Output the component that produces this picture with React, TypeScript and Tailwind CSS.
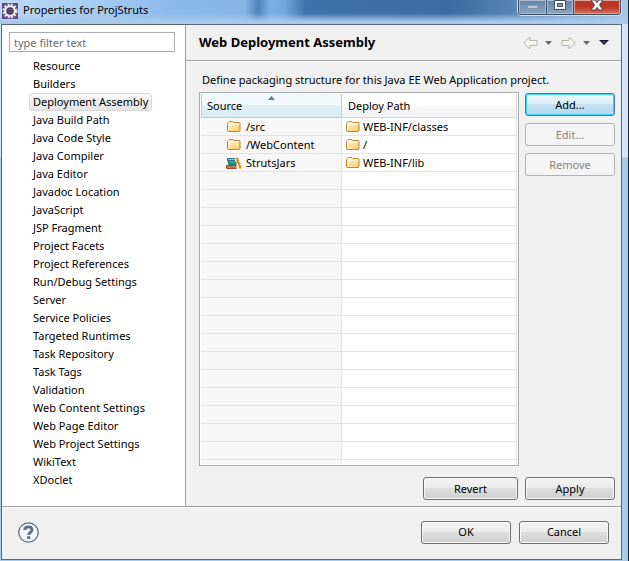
import { ReactNode } from "react"
import clsx from "clsx"

const pages = [
  "Resource",
  "Builders",
  "Deployment Assembly",
  "Java Build Path",
  "Java Code Style",
  "Java Compiler",
  "Java Editor",
  "Javadoc Location",
  "JavaScript",
  "JSP Fragment",
  "Project Facets",
  "Project References",
  "Run/Debug Settings",
  "Server",
  "Service Policies",
  "Targeted Runtimes",
  "Task Repository",
  "Task Tags",
  "Validation",
  "Web Content Settings",
  "Web Page Editor",
  "Web Project Settings",
  "WikiText",
  "XDoclet",
]

const mappings = [
  { source: "/src", path: "WEB-INF/classes", icon: "folder" },
  { source: "/WebContent", path: "/", icon: "folder" },
  { source: "StrutsJars", path: "WEB-INF/lib", icon: "library" },
]

const EMPTY_ROWS = 16

function FolderIcon() {
  return (
    <svg width="14" height="12" viewBox="0 0 14 12" className="shrink-0">
      <defs>
        <linearGradient id="folder" x1="0" y1="0" x2="1" y2="1">
          <stop offset="0" stopColor="#fffae6" />
          <stop offset="1" stopColor="#fcc95f" />
        </linearGradient>
      </defs>
      <path
        d="M.5 9.500V2.500q0-1 1-1l.7-1h3.600l.9 1H12q1 0 1 1v7q0 1-1 1H1.500q-1 0-1-1z"
        fill="url(#folder)"
        stroke="#bf8535"
      />
      <path d="M2 3h10" stroke="#fffdf0" />
    </svg>
  )
}

function LibraryIcon() {
  return (
    <svg width="16" height="12" viewBox="0 0 16 12" className="shrink-0">
      <path d="M1 1h8v3.500H1z" fill="#2b6f8f" />
      <path d="M2 2.500h7" stroke="#8cc4cf" />
      <path d="M2 4.500h8.500V8H3L2 7z" fill="#0d7a5c" />
      <path d="M3 6h7" stroke="#3cc795" />
      <path d="M0 8h10.500v4H1L0 11z" fill="#a8482a" />
      <path d="M1 10h9" stroke="#e8a888" />
      <path d="M9.500 1l2.300-1L15.800 11l-2.300 1z" fill="#eda520" />
      <path d="M11 2.500l3 8" stroke="#a8650f" strokeDasharray="2 1.500" />
    </svg>
  )
}

function Arrow({ flip }: { flip?: boolean }) {
  return (
    <svg width="15" height="12" viewBox="0 0 15 12" className={clsx(flip && "-scale-x-100")}>
      <path
        d="M.8 6L6 .7h1v2.800h7v5H7v2.800H6z"
        fill="#f7f7f0"
        stroke="#b4b4a8"
        strokeLinejoin="round"
      />
    </svg>
  )
}

function Caret() {
  return (
    <svg width="7" height="4" viewBox="0 0 7 4">
      <path d="M0 0h7L3.500 4z" fill="#6b6b6b" />
    </svg>
  )
}

function DialogButton({
  children,
  primary,
  disabled,
  wide,
}: {
  children: ReactNode
  primary?: boolean
  disabled?: boolean
  wide?: boolean
}) {
  return (
    <button
      disabled={disabled}
      className={clsx(
        "h-[23px] rounded-[3px] border text-center leading-5",
        wide ? "w-[95px]" : "w-[90px]",
        "disabled:border-[#adb2b5] disabled:bg-none disabled:bg-[#f4f4f4] disabled:text-[#838383] disabled:shadow-none",
        primary
          ? "border-[#3c7fb1] bg-[linear-gradient(#edf6fb_0%,#dceef8_48%,#c3e2f3_50%,#b2d7ed_100%)] shadow-[inset_0_0_0_1px_#38d0fa]"
          : "border-[#707070] bg-[linear-gradient(#f2f2f2_0%,#ebebeb_48%,#dddddd_50%,#cfcfcf_100%)] shadow-[inset_0_0_0_1px_#f8f8f8]"
      )}
    >
      {children}
    </button>
  )
}

function TitleBar() {
  return (
    <header className="flex h-6 items-start justify-between bg-[linear-gradient(transparent_55%,#a9c8ea_90%),linear-gradient(90deg,#bfd9f5_0px,#a4cbf3_100px,#8abaec_170px,#86b4e6_245px,#4f82b8_258px,#7aaee4_270px,#72a6dc_285px,#3f72aa_305px,#3b6ba1_450px,#5583b5_510px,#a9c8e8_100%)] pl-[2px]">
      <div className="flex items-center gap-1">
        <svg width="16" height="18" viewBox="0 0 16 18">
          <path d="M0 2h16v16H0z" fill="#5b4a80" />
          <circle cx="8" cy="10" r="6.300" fill="none" stroke="#e3e1ea" strokeWidth="2.500" strokeDasharray="2 1.300" />
          <circle cx="8" cy="10" r="4.800" fill="#453a5c" stroke="#f2f2f4" strokeWidth="2" />
          <path d="M5 8.500h6M5 11h6" stroke="#6b5c86" />
        </svg>
        <h1 className="pl-px leading-5">Properties for ProjStruts</h1>
      </div>
      <div className="mr-[7px] flex h-[15px] overflow-hidden rounded-b-[4px] border border-t-0 border-[#3b4a5e] shadow-[0_0_0_1px_#cfe0f2]">
        <button
          aria-label="Minimize"
          className="flex w-7 items-center justify-center border-r border-[#3b4a5e] bg-[linear-gradient(#6482a4,#8ba7c6)] shadow-[inset_0_0_0_1px_#a9bfd7]"
        >
          <svg width="11" height="4">
            <path d="M.5.5h10v3H.5z" fill="#bcc8d5" stroke="#8796a8" />
          </svg>
        </button>
        <button
          aria-label="Maximize"
          className="flex w-[27px] justify-center border-r border-[#3b4a5e] bg-[linear-gradient(#6482a4,#8ba7c6)] shadow-[inset_0_0_0_1px_#a9bfd7]"
        >
          <svg width="12" height="11">
            <path d="M0 0h12v10H0z" fill="#434e63" />
            <path d="M1 1h10v8H1z" fill="#fff" />
            <path d="M3.500 3.500h5v3h-5z" fill="#7d99b9" stroke="#434e63" />
          </svg>
        </button>
        <button
          aria-label="Close"
          className="flex w-[46px] justify-center bg-[linear-gradient(#b5392b_0%,#bf3524_50%,#d4705d_100%)] shadow-[inset_0_0_0_1px_#dba49b]"
        >
          <svg width="12" height="11">
            <path d="M0 0h4l2 2.500L8 0h4L8.500 5l3.500 5H8L6 7.500 4 10H0l3.500-5z" fill="#fff" stroke="#53424d" />
          </svg>
        </button>
      </div>
    </header>
  )
}

function Sidebar() {
  return (
    <nav className="w-[184px] shrink-0 border-r border-[#a0a0a0] bg-white pt-[7px]">
      <input
        aria-label="Filter"
        placeholder="type filter text"
        className="ml-[7px] block h-5 w-[166px] border border-[#abadb3] px-1 placeholder:text-[#6d6d6d]"
      />
      <ul className="mt-[5px] ml-[27px]">
        {pages.map((page) => (
          <li key={page} className="flex h-[18px]">
            <button
              className={clsx(
                "rounded-[3px] border px-[3px] leading-4",
                page === "Deployment Assembly"
                  ? "border-[#d9d9d9] bg-linear-to-b from-[#fafafa] to-[#e5e5e5]"
                  : "border-transparent"
              )}
            >
              {page}
            </button>
          </li>
        ))}
      </ul>
    </nav>
  )
}

function AssemblyTable() {
  return (
    <div className="min-w-0 flex-1 border border-[#abadb3] bg-white p-px">
      <table className="w-full table-fixed border-separate border-spacing-0">
        <thead>
          <tr className="h-6 text-left">
            <th className="relative w-[141px] border-x border-b border-[#96d9f9] bg-[linear-gradient(#f2f9fc_50%,#e1f1f9_50%,#d8ecf6)] px-[5px] pt-0.5 pb-0 font-normal">
              Source
              <svg width="7" height="4" className="absolute top-0.5 left-1/2 -ml-1">
                <path d="M0 4h7L3.500 0z" fill="#4d7f9c" />
              </svg>
            </th>
            <th className="border-r border-b border-[#d5d5d5] bg-[linear-gradient(#fff_50%,#f7f8fa_50%,#f1f2f4)] px-1.5 pt-0.5 pb-0 font-normal">
              Deploy Path
            </th>
          </tr>
        </thead>
        <tbody>
          {mappings.map((m) => (
            <tr key={m.source} className="h-[18px]">
              <td className="border-r border-b border-[#e3e3e3] bg-[#f7f7f7] p-0">
                <div className="flex items-center leading-4">
                  <span className="ml-[25px] flex w-5 justify-center pr-1">
                    {m.icon === "folder" ? <FolderIcon /> : <LibraryIcon />}
                  </span>
                  {m.source}
                </div>
              </td>
              <td className="border-r border-b border-[#e3e3e3] p-0">
                <div className="flex items-center gap-[3px] pl-1 leading-4">
                  <FolderIcon />
                  {m.path}
                </div>
              </td>
            </tr>
          ))}
          {Array.from({ length: EMPTY_ROWS }, (_, i) => (
            <tr key={i} className="h-[18px]">
              <td className="border-r border-b border-[#e3e3e3] bg-[#f7f7f7] p-0" />
              <td className="border-r border-b border-[#e3e3e3] p-0" />
            </tr>
          ))}
          <tr className="h-1">
            <td className="border-r border-[#e3e3e3] bg-[#f7f7f7] p-0" />
            <td className="border-r border-[#e3e3e3] p-0" />
          </tr>
        </tbody>
      </table>
    </div>
  )
}

export default function App() {
  return (
    <div className="flex min-h-screen flex-col border-r border-[#1b2430] bg-[linear-gradient(#d3e5f8_157px,#a8cbf0_158px)] font-['Noto_Sans',sans-serif] text-[11px] text-black">
      <TitleBar />
      <div className="mr-1.5 mb-px ml-px flex flex-1 flex-col border border-[#566579] bg-[#f0f0f0]">
        <div className="flex flex-1">
          <Sidebar />
          <main className="min-w-0 flex-1">
            <div className="flex h-9 items-center justify-between border-b border-[#a0a0a0] pr-3 pl-[13px]">
              <h2 className="text-[13px] font-bold">Web Deployment Assembly</h2>
              <div className="flex items-center gap-[9px]">
                <div className="flex items-center gap-[7px]">
                  <button aria-label="Back"><Arrow /></button>
                  <button aria-label="Back history"><Caret /></button>
                </div>
                <div className="flex items-center gap-[7px]">
                  <button aria-label="Forward"><Arrow flip /></button>
                  <button aria-label="Forward history"><Caret /></button>
                </div>
                <button aria-label="View menu">
                  <svg width="10" height="5" viewBox="0 0 10 5">
                    <path d="M0 0h10L5 5z" fill="#16122e" />
                    <path d="M2 1h5L5 3.500z" fill="#40389a" />
                  </svg>
                </button>
              </div>
            </div>
            <div className="border-t border-white pr-1.5 pb-1.5 pl-[13px]">
              <p className="pt-2 pb-0.5 pl-[3px] leading-5">
                Define packaging structure for this Java EE Web Application project.
              </p>
              <div className="flex gap-1.5">
                <AssemblyTable />
                <div className="flex flex-col gap-[7px] pt-px">
                  <DialogButton primary>Add...</DialogButton>
                  <DialogButton disabled>Edit...</DialogButton>
                  <DialogButton disabled>Remove</DialogButton>
                </div>
              </div>
              <div className="mt-[11px] flex justify-end gap-[7px]">
                <DialogButton wide>Revert</DialogButton>
                <DialogButton>Apply</DialogButton>
              </div>
            </div>
          </main>
        </div>
        <footer className="flex h-[53px] items-center justify-between border-t border-[#a0a0a0] pr-3 pb-0.5 pl-4 shadow-[inset_0_1px_0_#fff]">
          <button aria-label="Help">
            <svg width="21" height="21" viewBox="0 0 21 21">
              <circle cx="10.500" cy="10.500" r="9.700" fill="#f4f5f8" stroke="#5b6b8c" strokeWidth="1.300" />
              <path
                d="M6.700 8c0-2.300 1.500-3.200 3.700-3.200s3.600 1.100 3.600 2.900c0 2.600-3.300 2.600-3.300 5.300"
                fill="none"
                stroke="#5b6b8c"
                strokeWidth="2.800"
              />
              <path d="M9.200 14.200h3v2.800h-3z" fill="#5b6b8c" />
            </svg>
          </button>
          <div className="flex gap-2">
            <DialogButton>OK</DialogButton>
            <DialogButton>Cancel</DialogButton>
          </div>
        </footer>
      </div>
    </div>
  )
}
